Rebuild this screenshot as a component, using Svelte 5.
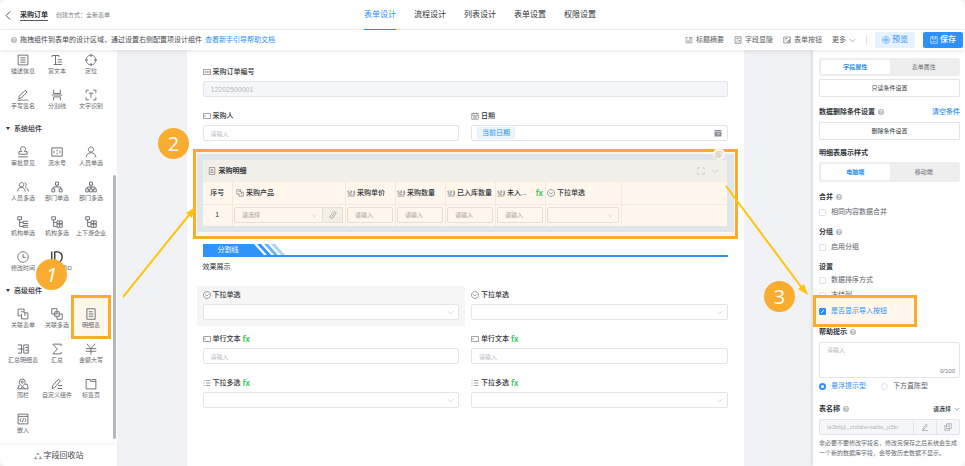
<script>
  const icons = {
    back: 'M10.5 2 4.5 8l6 6',
    down: 'M2 5l6 6 6-6',
    doc: 'M1.5 1.5h13v13h-13zM4.5 5h7M4.5 8h7M4.5 11h7',
    rich: 'M1.5 4V2h9v2M6 2v12M3.5 14h11M9 7.5h5.5M9 10.7h5.5',
    locate: 'M8 1.5a6.5 6.5 0 1 0 .01 0M8 0v4M8 12v4M0 8h4M12 8h4M7.6 8h.8',
    pen: 'M3 9.5 11 1.5l2.5 2.5-8 8L2.2 13zM1 15h4c2-2 3 1 5 0s3 0 5 0',
    split: 'M3.5 1v5h9V1M1 8h14M3.5 15v-4.500h9V15',
    scan: 'M1.500 5V1.500H5M11 1.500h3.500V5M14.500 11v3.500H11M5 14.500H1.500V11M5 5.500h6M8 5.500v6',
    stamp: 'M6.300 7.500C3 3 5 1 8 1s5 2 1.700 6.500M6.300 7.500H2.500v3.500h11V7.500H9.700M1.500 14.500h13',
    serial: 'M1 2.500h14v11H1zM4 6.500v3M8 5v2M8 9v2M12 6.500v3',
    user: 'M8 1.200a3.500 3.500 0 1 0 .01 0M1.500 15c.5-4 3-6 6.500-6s6 2 6.500 6',
    users: 'M6 2a3 3 0 1 0 .01 0M.800 14c.4-4 2-5.500 5.200-5.500S10.500 11 11 14M10 2.200a3 3 0 0 1 .8 5.500M11.500 8.800c2.200.5 3.300 2.200 3.700 5.200',
    org: 'M6 1.500h4v4H6zM8 5.500V8M3 10.500V8h10v2.500M1.200 10.500H5v4H1.200zM11 10.500h3.800v4H11z',
    orgs: 'M6 1.500h4v4H6zM8 5.500v5M2.700 10.500V8h10.600v2.500M1 10.500h3.500v4H1zM6.200 10.500h3.600v4H6.200zM11.500 10.500H15v4h-3.500z',
    tree: 'M1 1h5v4H1zM3.500 5v9H8M3.500 8.500H8M15 7H8v3h7M15 12.500H8V15h7',
    trees: 'M1 1h5v4H1zM3.500 5v9H8M3.500 8.500H8M8 6.500h7v4H8zM8 10.500h7V15H8zM11.500 6.500V15',
    clock: 'M8 1a7 7 0 1 0 .01 0M8 4v4.500h3.500',
    id: 'M1 .500v15M5 1.200v13.600h3.500c8.500 0 8.500-13.600 0-13.600z',
    link: 'M5 10.500H1.500v-9h8V5M5 5h4l1.500 2v3.500M6 14.500h8.500v-8H10M6 14.500V8',
    links: 'M1 1h7v7H1zM5 5h6v6H5zM10 8h5v7H8v-4',
    sheet: 'M2.500 1h11v14h-11zM5 5h5M5 8h6M5 11h6',
    sumsheet: 'M1 2.500h5v11H1M1 8h5M9 2.500h6v11H9zM11 6h4M11 9.500h4M6 8h3',
    sum: 'M13.500 4V1.500H2.500L8.500 8l-6 6.500h11V12',
    yen: 'M2.500 1 8 7.500 13.500 1M1 7.500h14M1 11h14M8 7.500V15.500',
    map: 'M7 1.500a4 4 0 0 0-4 4c0 2 1.500 3.500 4 6 2.500-2.500 4-4 4-6a4 4 0 0 0-4-4M7 4.300a1.300 1.300 0 1 0 .01 0M3 9l-2 5.500h14L13.500 8 11 9M5 14.500l2-3 4 3',
    custom: 'M2 10.500 10 1.500l2.500 2.500-8 9-3 1zM9.500 10H15M8.500 14H15',
    tabs: 'M1.500 2h6v2.500h7V14.500h-13zM9 2h5.500v2.500',
    embed: 'M1.500 1.500h13v13h-13zM1.500 4.500h13M5.500 7 4 9.500 5.500 12M10.500 7l1.500 2.500-1.500 2.500M9 7l-2 5',
    recycle: 'M5.500 6 8 2l2.500 4M12 8.500l2.500 5H9.500M6.500 13.500h-5L4 8.500',
    summary: 'M1 3h4M1 6h4M8 3h7M8 6h7M1 10h14M1 13.500h14',
    hide: 'M2 1.500h12v13H2zM5 5h6M5 8h2M9 8l3 3M9 11l3-3M5 11.500h2',
    formbtn: 'M1.500 2h13v12h-13zM4 5h5M4 8h3M8 12l5-5v5z',
    eye: 'M8 1.200a6.800 6.800 0 1 0 .01 0M3.500 8c2-3.500 7-3.500 9 0-2 3.500-7 3.500-9 0M8 6.800a1.200 1.200 0 1 0 .01 0',
    save: 'M1.500 1.500h13v13h-13zM5 1.500V6h6V1.500M5 11h6',
    code: 'M1 3h14v10H1zM4 6v4M6.500 6v4M9.500 6v4M12 6v4',
    text: 'M1 3h14v10H1zM4 6v4',
    date: 'M1.500 3h13v11.500h-13zM1.500 6.500h13M5 1v3M11 1v3M4.500 9.500h7M4.500 12h7',
    num: 'M1 5l1.500-1.500V11M5.500 4H9v3.500H5.500V11H9M11.500 4H15v7h-3.500M12 7.500h3M1 14h14',
    choose: 'M8 1a7 7 0 1 0 .01 0M4.500 6.500 8 10l3.500-3.500',
    list: 'M1 3h2M6 3h9M1 8h2M6 8h9M1 13h2M6 13h9',
    chain: 'M6 10.500 10.500 5M7 4.500l2.500-2.500c2.500-2 6 1 4 4L9.500 11c-.6.700-1.300 1-2 1M9 11.500 6.500 14c-2.500 2-6-1-4-4L6.500 5',
    expand: 'M1.500 5V1.500H5M11 1.500h3.500V5M14.500 11v3.500H11M5 14.500H1.500V11',
    edit: 'M4 10.500 10.500 2 13 4 6.500 12.500 3.500 13zM2 15h12',
    copy: 'M5 1.500h9.500V11H5zM11 11v3.500H1.500V5H5M7.500 4.500H12M7.500 7.500H12'
  };

  const groups = [
    { title: '', items: [['doc', '描述信息'], ['rich', '富文本'], ['locate', '定位'], ['pen', '手写签名'], ['split', '分割线'], ['scan', '文字识别']] },
    { title: '系统组件', items: [['stamp', '审批意见'], ['serial', '流水号'], ['user', '人员单选'], ['users', '人员多选'], ['org', '部门单选'], ['orgs', '部门多选'], ['tree', '机构单选'], ['trees', '机构多选'], ['trees', '上下游企业'], ['clock', '修改时间'], ['id', '关联数据ID']] },
    { title: '高级组件', items: [['link', '关联表单'], ['links', '关联多选'], ['sheet', '明细表'], ['sumsheet', '汇总明细表'], ['sum', '汇总'], ['yen', '金额大写'], ['map', '围栏'], ['custom', '自定义组件'], ['tabs', '标签页'], ['embed', '嵌入']] }
  ];
  const tabs = ['表单设计', '流程设计', '列表设计', '表单设置', '权限设置'];
  const tools = [['summary', '标题摘要'], ['hide', '字段显隐'], ['formbtn', '表单按钮']];
  const numberCols = ['采购单价', '采购数量', '已入库数量', '未入...'];

  let sortRows = $state(false);
  let freeze = $state(false);
  let showImport = $state(true);
  let tip = $state('float');
</script>

{#snippet icon(name, size = 8)}
  <svg class="icon" width={size} height={size} viewBox="0 0 16 16" aria-hidden="true"><path d={icons[name]} /></svg>
{/snippet}

{#snippet help()}<span class="help">?</span>{/snippet}

{#snippet segment(first, second)}
  <button class="on">{first}</button><button>{second}</button>
{/snippet}

{#snippet textField(id, ic, label, fx)}
  <div class="field">
    <label for={id}>{@render icon(ic)}{label}{#if fx}<b class="fx">fx</b>{/if}</label>
    <input {id} class="box" placeholder="请输入" />
  </div>
{/snippet}

{#snippet selectField(id, ic, label, fx, shaded)}
  <div class="field" class:shaded>
    <label for={id}>{@render icon(ic)}{label}{#if fx}<b class="fx">fx</b>{/if}</label>
    <div class="pick"><select {id} class="box"><option value=""></option></select>{@render icon('down', 7)}</div>
  </div>
{/snippet}

<div class="app">
  <header>
    <div class="title">
      <button class="back" aria-label="返回">{@render icon('back', 11)}</button>
      <h1>采购订单</h1>
      <span>创建方式：全新表单</span>
    </div>
    <nav>
      {#each tabs as tab, i}<a href="#tab{i}" class:active={i === 0}>{tab}</a>{/each}
    </nav>
    <div></div>
  </header>

  <div class="toolbar">
    {@render help()}
    <span class="hint">拖拽组件到表单的设计区域，通过设置右侧配置项设计组件</span>
    <a href="#guide">查看新手引导帮助文档</a>
    <div class="tools">
      {#each tools as [ic, name]}<button class="tool">{@render icon(ic)}{name}</button>{/each}
      <button class="tool">更多{@render icon('down', 7)}</button>
      <i class="bar"></i>
      <button class="preview">{@render icon('eye')}预览</button>
      <button class="save">{@render icon('save')}保存</button>
    </div>
  </div>

  <div class="body">
    <aside class="palette">
      <div class="scroll">
        {#each groups as group}
          {#if group.title}<h2><i class="caret"></i>{group.title}</h2>{/if}
          <div class="grid">
            {#each group.items as [ic, name]}
              <button class="item" class:marked={name === '明细表'} class:strong={ic === 'id'}>{@render icon(ic, 12)}<span>{name}</span></button>
            {/each}
          </div>
        {/each}
      </div>
      <div class="thumb"></div>
      <button class="recycle">{@render icon('recycle')}字段回收站</button>
    </aside>

    <main>
      <div class="field">
        <label for="code">{@render icon('code')}采购订单编号</label>
        <input id="code" class="box off" value="12202500001" disabled />
      </div>
      <div class="pair">
        {@render textField('buyer', 'text', '采购人', false)}
        <div class="field">
          <label for="date">{@render icon('date')}日期</label>
          <div class="box datebox">
            <span class="chip">当前日期</span>
            <input id="date" readonly />
            <svg width="8" height="8" viewBox="0 0 16 16" aria-hidden="true"><path fill="#8c9096" d="M1 2h14v3H1zM1 6h14v9H1z" /><path stroke="#fff" fill="none" d="M5.500 8.500h5L8 13" /></svg>
          </div>
        </div>
      </div>

      <section class="frame">
        <div class="zone">
          <button class="clone" aria-label="复制">{@render icon('copy', 7)}</button>
          <div class="caption">{@render icon('sheet')}<b>采购明细</b><span></span>{@render icon('expand')}{@render icon('down')}</div>
          <table>
            <colgroup><col class="c-no" /><col class="c-prod" /><col class="c-num" /><col class="c-num" /><col class="c-num" /><col class="c-num" /><col class="c-sel" /><col /></colgroup>
            <thead>
              <tr>
                <th class="mid">序号</th>
                <th class="first"><div>{@render icon('link')}采购产品</div></th>
                {#each numberCols as col, i}
                  <th><div>{@render icon('num')}{col}{#if i === 3}<b class="fx end">fx</b>{/if}</div></th>
                {/each}
                <th><div>{@render icon('choose')}下拉单选</div></th>
                <th></th>
              </tr>
            </thead>
            <tbody>
              <tr>
                <td class="mid">1</td>
                <td>
                  <div class="combo">
                    <div class="pick"><select class="box" aria-label="采购产品"><option>请选择</option></select>{@render icon('down', 7)}</div>
                    <button aria-label="关联">{@render icon('chain')}</button>
                  </div>
                </td>
                {#each numberCols as col}<td><input class="box" placeholder="请输入" aria-label={col} /></td>{/each}
                <td><div class="pick"><select class="box" aria-label="下拉单选"><option value=""></option></select>{@render icon('down', 7)}</div></td>
                <td></td>
              </tr>
            </tbody>
          </table>
        </div>
      </section>

      <div class="divider">
        <span>分割线</span>
        <svg width="32" height="11" viewBox="0 0 32 11" aria-hidden="true">
          <path fill="#2e93fb" d="M0 0 10 11H0z" /><path fill="#2e93fb" d="M3 0h4l10 11h-4z" />
          <path fill="#6bb2fc" d="M10 0h4l10 11h-4z" /><path fill="#a9d2fd" d="M17 0h4l10 11h-4z" />
        </svg>
      </div>
      <p class="effect">效果展示</p>

      <div class="pair">
        {@render selectField('s1', 'choose', '下拉单选', false, true)}
        {@render selectField('s2', 'choose', '下拉单选', false, false)}
      </div>
      <div class="pair">
        {@render textField('t1', 'text', '单行文本', true)}
        {@render textField('t2', 'text', '单行文本', true)}
      </div>
      <div class="pair">
        {@render selectField('m1', 'list', '下拉多选', true, false)}
        {@render selectField('m2', 'list', '下拉多选', true, false)}
      </div>
    </main>

    <aside class="props">
      <div class="seg">{@render segment('字段属性', '表单属性')}</div>
      <button class="wide near">只读条件设置</button>
      <div class="head">数据删除条件设置{@render help()}<a href="#clear">清空条件</a></div>
      <button class="wide">删除条件设置</button>
      <div class="head">明细表展示样式</div>
      <div class="seg tall">{@render segment('电脑端', '移动端')}</div>
      <div class="head">合并{@render help()}</div>
      <label class="check"><input type="checkbox" />相同内容数据合并</label>
      <div class="head">分组{@render help()}</div>
      <label class="check"><input type="checkbox" />启用分组</label>
      <div class="head">设置</div>
      <label class="check tight"><input type="checkbox" bind:checked={sortRows} />数据排序方式</label>
      <label class="check"><input type="checkbox" bind:checked={freeze} />冻结列</label>
      <label class="check picked"><input type="checkbox" bind:checked={showImport} />是否显示导入按钮</label>
      <label class="head after" for="tip">帮助提示{@render help()}</label>
      <div class="area"><textarea id="tip" placeholder="请输入"></textarea><span>0/100</span></div>
      <div class="radios">
        <label class="check tight"><input type="radio" value="float" bind:group={tip} />悬浮提示型</label>
        <label class="check tight"><input type="radio" value="below" bind:group={tip} />下方直陈型</label>
      </div>
      <div class="head last"><label for="tname">表名称</label>{@render help()}<button>请选择{@render icon('down', 6)}</button></div>
      <div class="name">
        <input id="tname" value="la3bbj1_childrentable_p5kr" disabled />
        <button aria-label="编辑">{@render icon('edit')}</button>
        <button aria-label="复制名称">{@render icon('copy')}</button>
      </div>
      <p>非必要不要修改字段名，修改完保存之后系统会生成一个新的数据库字段，会导致历史数据不显示。</p>
    </aside>
  </div>

  <svg class="arrows" width="965" height="466" viewBox="0 0 965 466" aria-hidden="true">
    <path d="M123 297 189 215M726 186l76 102" stroke="#fec412" stroke-width="2" />
    <path d="M195 207l-3 11-6-5zM808 295l-10-6 6-5z" fill="#fec412" />
  </svg>
  <span class="badge b1">1</span>
  <span class="badge b2">2</span>
  <span class="badge b3">3</span>
</div>

<style>
  :global(body) { background: #f3f3f4; overflow: hidden; }
  .app {
    position: relative; display: flex; flex-direction: column; height: 100vh; overflow: hidden;
    border-radius: 6px; background: #fff; color: #303338;
    font: 7px/10px "Liberation Sans", "Noto Sans CJK SC", sans-serif;
  }
  .app *, .app ::before { box-sizing: border-box; }
  button, input, select, textarea { font: inherit; color: inherit; margin: 0; padding: 0; border: 0; background: none; min-width: 0; }
  button { cursor: pointer; display: flex; align-items: center; justify-content: center; }
  a { color: #2e8ffa; text-decoration: none; }
  h1, h2, p { margin: 0; font-size: 7px; }
  .icon { flex: none; fill: none; stroke: currentColor; stroke-width: 1.200; }
  .help {
    display: inline-flex; flex: none; align-items: center; justify-content: center; width: 6px; height: 6px;
    border-radius: 50%; background: #b6b9be; color: #fff; font-size: 5px; line-height: 6px; font-weight: 700;
  }
  .fx { color: #27c346; font: 600 8px/10px "Open Sans", sans-serif; }

  header { display: grid; grid-template-columns: 1fr auto 1fr; height: 30px; padding: 0 8px 0 3px; border-bottom: 1px solid #f1f2f3; flex: none; }
  .title { display: flex; align-items: center; gap: 6px; }
  .title h1 { border-bottom: 1px solid #55585e; line-height: 10px; margin-right: 2px; }
  .title span { font-size: 6px; color: #777b82; }
  nav { display: flex; gap: 18px; font-size: 8px; }
  nav a { display: flex; align-items: center; height: 30px; color: #303338; border-bottom: 1px solid transparent; }
  nav .active { color: #2e8ffa; border-color: #2e8ffa; }

  .toolbar { display: flex; align-items: center; height: 20px; padding: 0 2px 0 11px; gap: 3px; flex: none; box-shadow: 0 1px 4px #0000001c; position: relative; z-index: 2; background: #fff; color: #5a5e65; }
  .hint { color: #45484e; }
  .tools { display: flex; align-items: center; gap: 10px; margin-left: auto; }
  .tool { gap: 3px; }
  .bar { width: 1px; height: 8px; background: #dfe1e5; margin-right: -2px; }
  .preview, .save { width: 40px; height: 16px; gap: 2px; border-radius: 2px; font-size: 8px; background: #e6f2ff; color: #2e8ffa; }
  .save { background: #2e90fa; color: #fff; font-weight: 500; margin-left: -2px; }

  .body { display: flex; flex: 1; min-height: 0; background: #f1f2f6; justify-content: space-between; }
  .palette { position: relative; width: 117px; flex: none; display: flex; flex-direction: column; background: #fff; }
  .scroll { flex: 1; min-height: 0; overflow: hidden; padding: 4px 9px 0 6px; }
  .grid { display: grid; grid-template-columns: repeat(3, 34px); row-gap: 13px; }
  h2 { display: flex; align-items: center; gap: 4px; height: 35px; font-weight: 500; }
  .caret { border: 2px solid transparent; border-top: 3px solid #303338; border-bottom: 0; }
  .item { position: relative; flex-direction: column; font-size: 6px; color: #63676d; white-space: nowrap; isolation: isolate; }
  .strong .icon { color: #303338; overflow: visible; stroke-width: 1.800; }
  .marked::before { content: ''; position: absolute; inset: -13px -3px -9px; border: 3px solid #f9ad30; background: #fff7ec; z-index: -1; }
  .thumb { position: absolute; right: 1px; top: 125px; bottom: 27px; width: 3px; border-radius: 2px; background: #b4b7bb; }
  .recycle { height: 21px; gap: 2px; flex: none; font-size: 8px; box-shadow: 0 -1px 4px #0000000f; color: #45484e; }

  main { flex: 0 1 557px; min-width: 0; background: #fff; padding: 15px 16px 0; overflow: hidden; display: flex; flex-direction: column; gap: 12px; }
  .pair { display: grid; grid-template-columns: 1fr 1fr; gap: 12px; }
  .field { position: relative; display: flex; flex-direction: column; gap: 2px; isolation: isolate; min-width: 0; }
  .field label { display: flex; align-items: center; gap: 2px; height: 14px; font-weight: 500; }
  .field .icon { color: #63676d; }
  .shaded::before { content: ''; position: absolute; inset: -2px -6px -6px; background: #f6f6f7; z-index: -1; }
  .box { display: block; width: 100%; height: 16px; border: 1px solid #e3e5ea; border-radius: 2px; background: #fff; padding: 0 7px; color: #5f636a; }
  .box::placeholder, textarea::placeholder { color: #b3b7be; font-size: 6px; opacity: 1; }
  .off { background: #f5f6fa; color: #b3b7be; }
  .pick { position: relative; flex: 1; min-width: 0; }
  .pick select { appearance: none; }
  .pick .icon { position: absolute; right: 5px; top: 5px; color: #b3b7be; pointer-events: none; }
  .datebox { display: flex; align-items: center; padding: 0 5px; }
  .datebox input { flex: 1; }
  .chip { background: #e8f4ff; color: #2e8ffa; padding: 1px 5px; border-radius: 1px; }

  .frame { margin: -4px -10px -7px; border: 3px solid #f9ad30; background: #fff7ec; padding: 2px 1px 4px; }
  .zone { position: relative; background: #dfe6ec; padding: 6px 7px 6px 6px; }
  .clone { position: absolute; right: 9px; top: -6px; width: 12px; height: 12px; border-radius: 50%; background: #fbf5ec; color: #b5aea4; }
  .caption { display: flex; align-items: center; gap: 6px; height: 22px; padding: 0 8px 0 5px; background: #f2efe9; color: #b9b7b3; }
  .caption b { color: #303338; margin-left: -3px; }
  .caption .icon:first-child { color: #6b6d70; }
  .caption span { flex: 1; }
  table { width: 100%; table-layout: fixed; border-collapse: collapse; background: #fff7ec; }
  .c-no { width: 30px; } .c-prod { width: 113px; } .c-num { width: 50px; } .c-sel { width: 76px; }
  th, td { height: 22px; padding: 0 2px 0 1px; font-weight: 500; border-right: 1px solid #f4eadc; text-align: left; overflow: hidden; white-space: nowrap; }
  th { border-bottom: 1px solid #f4eadc; }
  th:last-child, td:last-child { border-right: 0; }
  th.mid, td.mid { text-align: center; padding: 0; }
  th.first { padding-left: 3px; }
  th div { display: flex; align-items: center; gap: 2px; }
  th .icon { color: #63676d; }
  .end { margin-left: auto; }
  td .box { background: transparent; border-color: #e5ded4; font-size: 6px; color: #b8b3ab; }
  td .box::placeholder { color: #b8b3ab; }
  .combo { display: flex; }
  .combo button { width: 20px; height: 16px; background: #f3eee6; border: 1px solid #e5ded4; border-left: 0; color: #8c8983; }

  .divider { display: flex; height: 13px; border-bottom: 2px solid #2e93fb; }
  .divider span { width: 51px; text-align: center; background: #2e93fb; color: #fff; line-height: 12px; }
  .effect { margin: -7px 0 4px; }

  .props { width: 152px; flex: none; background: #fff; padding: 8px 5px 0 6px; box-shadow: -1px 0 4px #0000001c; display: flex; flex-direction: column; position: relative; overflow: hidden; }
  .seg { display: flex; height: 18px; padding: 2px; background: #ededee; border-radius: 3px; font-size: 6px; color: #6b6e74; flex: none; }
  .tall { height: 20px; margin-top: 4px; }
  .seg button { flex: 1; border-radius: 2px; }
  .seg .on { background: #fff; color: #2e8ffa; font-weight: 700; }
  .wide { height: 18px; margin-top: 5px; border: 1px solid #e3e5ea; border-radius: 1px; font-size: 6px; flex: none; }
  .near { margin-top: 3px; }
  .head { display: flex; align-items: center; gap: 3px; height: 10px; margin-top: 10px; font-weight: 700; flex: none; }
  .head a, .head button { margin-left: auto; font-weight: 500; }
  .wide + .head:has(+ .tall) { margin-top: 8px; }
  .after { margin-top: 11px; }
  .last { margin-top: 13px; }
  .head button { font-size: 6px; gap: 3px; }
  .check { position: relative; display: flex; align-items: center; gap: 5px; height: 10px; margin-top: 5px; color: #5a5e65; flex: none; }
  .tight { margin-top: 3px; }
  .check input { appearance: none; width: 7px; height: 7px; border: 1px solid #dfe2e7; border-radius: 1px; background: #fff; }
  .check input[type='radio'] { border-radius: 50%; }
  .check input[type='radio']:checked { border: 2px solid #2e8ffa; }
  .check:has(:checked) { color: #2e8ffa; }
  .check input[type='checkbox']:checked { border-color: #2e8ffa; background: linear-gradient(135deg, transparent 40%, #fff 40%, #fff 55%, transparent 55%) center / 3px 3px no-repeat #2e8ffa; }
  .picked { isolation: isolate; margin-top: 6px; }
  .picked::before { content: ''; position: absolute; inset: -11px auto -11px -6px; width: 104px; border: 3px solid #f9ad30; background: #fff7ec; z-index: -1; }
  .area { position: relative; margin-top: 5px; height: 36px; flex: none; }
  .area textarea { display: block; width: 100%; height: 36px; border: 1px solid #e3e5ea; border-radius: 2px; padding: 2px 7px; resize: none; }
  .area span { position: absolute; right: 5px; bottom: 2px; font-size: 6px; color: #777b82; }
  .radios { display: flex; gap: 15px; }
  .name { display: flex; height: 16px; margin-top: 5px; flex: none; background: #f5f6fa; border: 1px solid #e3e5ea; border-radius: 2px; color: #8c9096; }
  .name input { flex: 1; padding: 0 7px; font-size: 6px; color: #b3b7be; }
  .name button { width: 23px; border-left: 1px solid #e3e5ea; }
  .props p { margin-top: 3px; font-size: 6px; color: #666a71; }

  .arrows { position: absolute; left: 0; top: 0; z-index: 3; pointer-events: none; fill: none; }
  .badge { position: absolute; z-index: 4; display: flex; align-items: center; justify-content: center; width: 31px; height: 31px; border-radius: 50%; background: #f9ad30; color: #fff; font: 500 20px/31px "Open Sans", sans-serif; }
  .b1 { left: 36px; top: 259px; font-style: italic; }
  .b2 { left: 158px; top: 128px; }
  .b3 { left: 764px; top: 281px; }
</style>
